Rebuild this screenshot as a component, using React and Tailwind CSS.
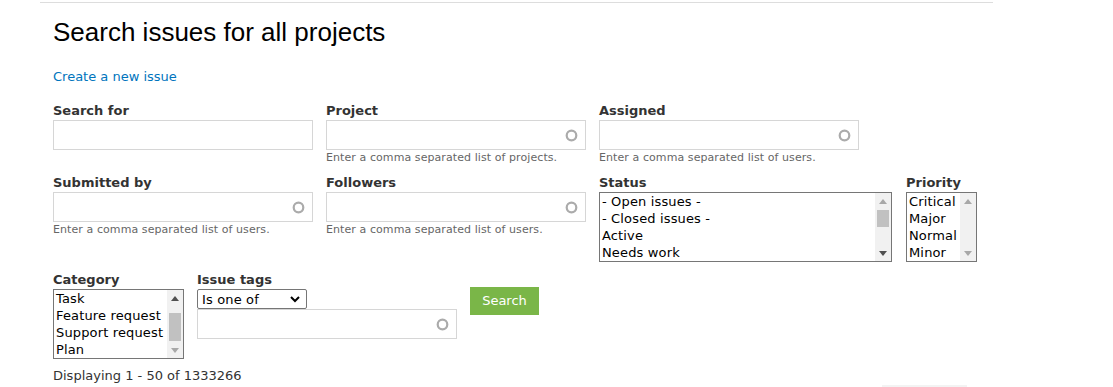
import React from 'react';

const Label = ({ children }) => (
  <div className="text-[13px] leading-[18px] font-bold text-[#333]">{children}</div>
);

const Help = ({ children }) => (
  <div className="mt-[1px] text-[11px] leading-[14px] tracking-[0.08px] text-[#666]">{children}</div>
);

function Throbber() {
  return (
    <svg width="13" height="13" viewBox="0 0 13 13">
      <circle cx="6.5" cy="6.5" r="4.8" fill="none" stroke="#ababab" strokeWidth="2.2" />
    </svg>
  );
}

function TextInput({ auto, width = 'w-[260px]' }) {
  return (
    <div className={`${width} h-[30px] border border-[#d6d6d6] bg-white flex items-center justify-end pr-[7px]`}>
      {auto && <Throbber />}
    </div>
  );
}

function Arrow({ up, dark }) {
  return (
    <svg width="8" height="5" viewBox="0 0 8 5">
      <path d={up ? 'M0 5 L4 0 L8 5 Z' : 'M0 0 L4 5 L8 0 Z'} fill={dark ? '#505050' : '#a8a8a8'} />
    </svg>
  );
}

function ListBox({ items, width, upDark, downDark, thumb }) {
  return (
    <div className={`${width} h-[70px] border border-[#767676] bg-white flex`}>
      <div className="flex-1 pl-[2px] overflow-hidden">
        {items.map((it) => (
          <div key={it} className="text-[13px] leading-[17px] tracking-[0.15px] text-black whitespace-nowrap">
            {it}
          </div>
        ))}
      </div>
      <div className="w-[16px] bg-[#f1f1f1] flex flex-col">
        <div className="h-[16px] flex items-center justify-center">
          <Arrow up dark={upDark} />
        </div>
        <div className="flex-1 px-[2px]">
          {thumb && <div className={`${thumb} bg-[#c1c1c1]`} />}
        </div>
        <div className="h-[16px] flex items-center justify-center">
          <Arrow dark={downDark} />
        </div>
      </div>
    </div>
  );
}

export default function App() {
  return (
    <div className="bg-white min-h-[387px] font-['DejaVu_Sans',Verdana,sans-serif]">
      <div className="ml-[40px] w-[953px] mt-[2px] border-t border-[#dddddd] px-[13px]">
        <h1 className="mt-[14px] text-[26px] leading-[30px] text-black font-normal font-['Liberation_Sans',Arial,sans-serif]">
          Search issues for all projects
        </h1>
        <div className="mt-[21px] text-[13px] leading-[18px]">
          <a href="#" className="text-[#0074bd]">Create a new issue</a>
        </div>

        <div className="mt-[16px] flex gap-[13px]">
          <div>
            <Label>Search for</Label>
            <TextInput />
          </div>
          <div>
            <Label>Project</Label>
            <TextInput auto />
            <Help>Enter a comma separated list of projects.</Help>
          </div>
          <div>
            <Label>Assigned</Label>
            <TextInput auto />
            <Help>Enter a comma separated list of users.</Help>
          </div>
        </div>

        <div className="mt-[9px] flex gap-[13px]">
          <div>
            <Label>Submitted by</Label>
            <TextInput auto />
            <Help>Enter a comma separated list of users.</Help>
          </div>
          <div>
            <Label>Followers</Label>
            <TextInput auto />
            <Help>Enter a comma separated list of users.</Help>
          </div>
          <div className="flex gap-[14px]">
            <div>
              <Label>Status</Label>
              <ListBox
                width="w-[293px]"
                items={['- Open issues -', '- Closed issues -', 'Active', 'Needs work']}
                downDark
                thumb="mt-[1px] h-[17px]"
              />
            </div>
            <div>
              <Label>Priority</Label>
              <ListBox width="w-[71px]" items={['Critical', 'Major', 'Normal', 'Minor']} />
            </div>
          </div>
        </div>

        <div className="mt-[9px] flex gap-[13px]">
          <div>
            <Label>Category</Label>
            <ListBox
              width="w-[131px]"
              items={['Task', 'Feature request', 'Support request', 'Plan']}
              upDark
              thumb="mt-[7px] h-[28px]"
            />
          </div>
          <div>
            <Label>Issue tags</Label>
            <div className="w-[110px] h-[20px] border border-[#767676] rounded-[2px] bg-white flex items-center justify-between pl-[4px] pr-[6px]">
              <span className="text-[13px] leading-[17px] tracking-[0.15px] text-black">Is one of</span>
              <svg width="10" height="7" viewBox="0 0 10 7">
                <path d="M1 1 L5 5 L9 1" fill="none" stroke="#000" strokeWidth="2" />
              </svg>
            </div>
            <TextInput auto />
          </div>
          <div className="pt-[16px]">
            <button className="w-[69px] h-[28px] bg-[#7ab648] text-white text-[13px] leading-[18px] font-['DejaVu_Sans',Verdana,sans-serif]">
              Search
            </button>
          </div>
        </div>

        <div className="mt-[8px] text-[13px] leading-[18px] text-[#333]">Displaying 1 - 50 of 1333266</div>
        <div className="ml-[829px] w-[85px] h-[10px] bg-[#f3f3f3]" />
      </div>
    </div>
  );
}
